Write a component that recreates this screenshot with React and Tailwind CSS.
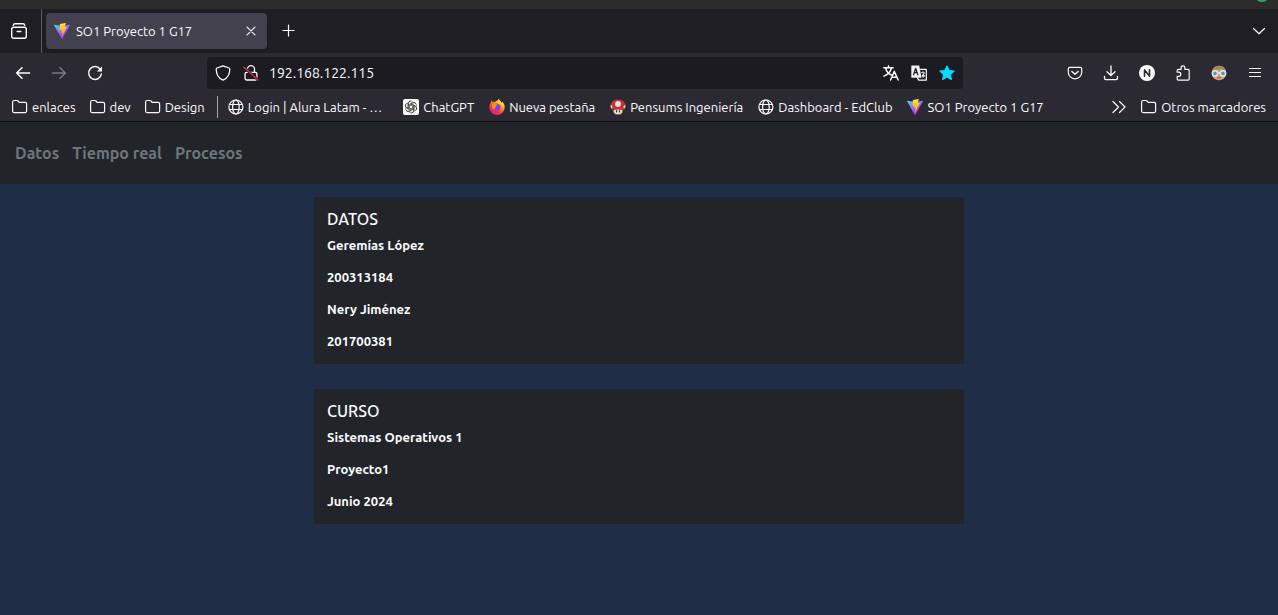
import React from "react";

function Icon({ children, size = "size-4", className = "" }) {
  return (
    <svg
      viewBox="0 0 16 16"
      className={`${size} shrink-0 ${className}`}
      fill="none"
      stroke="currentColor"
      strokeWidth="1.2"
      strokeLinecap="round"
      strokeLinejoin="round"
      aria-hidden="true"
    >
      {children}
    </svg>
  );
}

const FolderIcon = () => (
  <Icon>
    <path d="M.6 12.100V3a1.500 1.500 0 0 1 1.500-1.500h2.700c.5 0 .9.2 1.200.5l1.100 1.300h6a1.500 1.500 0 0 1 1.500 1.500v7.300a1.500 1.500 0 0 1-1.500 1.500h-11a1.500 1.500 0 0 1-1.500-1.500z" />
  </Icon>
);

const GlobeIcon = () => (
  <Icon>
    <circle cx="7.900" cy="8" r="7" />
    <ellipse cx="7.900" cy="8" rx="3.300" ry="7" />
    <path d="M1.600 5.500h12.600M1.600 10.500h12.600" />
  </Icon>
);

function ViteIcon({ id }) {
  return (
    <svg viewBox="0 0 256 257" className="size-4 shrink-0" aria-hidden="true">
      <defs>
        <linearGradient id={`${id}-a`} x1="-.8%" x2="57.6%" y1="7.7%" y2="78.4%">
          <stop offset="0%" stopColor="#41D1FF" />
          <stop offset="100%" stopColor="#BD34FE" />
        </linearGradient>
        <linearGradient id={`${id}-b`} x1="43.4%" x2="50.3%" y1="2.2%" y2="89%">
          <stop offset="0%" stopColor="#FFEA83" />
          <stop offset="8.3%" stopColor="#FFDD35" />
          <stop offset="100%" stopColor="#FFA800" />
        </linearGradient>
      </defs>
      <path
        fill={`url(#${id}-a)`}
        d="M255.2 37.9 134.9 252.98c-2.5 4.4-8.9 4.5-11.4.1L.87 37.96c-2.7-4.8 1.4-10.6 6.8-9.6l120.4 21.5c.8.1 1.6.1 2.3 0l117.9-21.5c5.4-1 9.6 4.8 6.9 9.6Z"
      />
      <path
        fill={`url(#${id}-b)`}
        d="M185.4.06 96.4 17.5a3.3 3.3 0 0 0-2.6 3l-5.5 92.5a3.3 3.3 0 0 0 4 3.4l24.8-5.7c2.3-.5 4.4 1.5 3.9 3.9l-7.4 36a3.3 3.3 0 0 0 4.2 3.8l15.3-4.6c2.4-.7 4.7 1.3 4.2 3.8l-11.7 56.6c-.7 3.5 4 5.5 5.900 2.5l1.3-2 72.5-144.7c1.2-2.400-.9-5.200-3.500-4.700l-25.500 4.900c-2.400.5-4.400-1.800-3.800-4.100L189.4 4.2c.7-2.400-1.400-4.600-4-4.100Z"
      />
    </svg>
  );
}

function ChatIcon() {
  return (
    <svg viewBox="0 0 16 16" className="size-4 shrink-0" aria-hidden="true">
      <rect width="16" height="16" rx="2" fill="#fff" />
      <g fill="none" stroke="#222" strokeWidth=".6">
        {[0, 60, 120, 180, 240, 300].map((angle) => (
          <path
            key={angle}
            transform={`rotate(${angle} 8 8)`}
            d="M4.900 9.300V4.800a2.800 2.800 0 0 1 5-1.600M6.300 9V6l3.300-1.900a2.800 2.800 0 0 1 3.400.4"
          />
        ))}
      </g>
    </svg>
  );
}

function FirefoxIcon() {
  return (
    <svg viewBox="0 0 16 16" className="size-4 shrink-0" aria-hidden="true">
      <defs>
        <linearGradient id="fx-body" x1=".85" y1=".1" x2=".2" y2=".95">
          <stop offset="0" stopColor="#fff44f" />
          <stop offset=".35" stopColor="#ff980e" />
          <stop offset=".65" stopColor="#ff3647" />
          <stop offset="1" stopColor="#e31587" />
        </linearGradient>
      </defs>
      <path
        fill="url(#fx-body)"
        d="M10 0c.4 1.8 2 2.5 3 3.8.2-.4.2-.8.1-1.2 1.600 1.400 2.600 3.500 2.600 5.700A7.700 7.700 0 0 1 .3 8.300C.3 6 1.300 4.100 2 3.200c0-.7.300-1.600.7-2 .2.700.700 1.300 1.200 1.700.700-.2 1.500-.2 2.100 0C6.800 1.900 8.600 1.700 10 0z"
      />
      <circle cx="7.900" cy="8.200" r="3.500" fill="#7543e5" />
      <path
        fill="#ff980e"
        d="M2.800 5.200c1.200-.9 2.900-.8 3.900.1.700 0 1.500.1 2 .3-.3 1-1.500 1-1.900 1.500-.3.500.1 1 .1 1-1 .6-1.600 1.500-1 2.600-1.700-.2-3.500-2.600-3.100-5.500z"
      />
      <path fill="#ffd23a" d="M10 0c.4 2.400 3.200 3.200 3.300 6.800-.7-1.500-1.900-2.200-3.300-2.300C8.500 3.600 8.600 1.700 10 0z" />
    </svg>
  );
}

function MushroomIcon() {
  return (
    <svg viewBox="0 0 16 16" className="size-4 shrink-0" aria-hidden="true">
      <path
        fill="#f3d9c0"
        stroke="#6d4a42"
        strokeWidth=".6"
        d="M3.300 10h9.400c.3 3-.6 5.700-4.700 5.700S3 13 3.300 10z"
      />
      <path
        fill="#c93337"
        stroke="#6d3a3d"
        strokeWidth=".5"
        d="M8 .4c4.400 0 7.600 3 7.600 6.700 0 2.300-1.200 3.900-2.600 3.900-1.200 0-2.200-1-5-1s-3.800 1-5 1C1.600 11 .4 9.400.4 7.100.4 3.400 3.600.4 8 .4z"
      />
      <circle cx="8" cy="5" r="2.900" fill="#e4e0de" />
      <path fill="#ddd8d6" d="M.8 5.900c1.500.2 2 1.600 1.400 3.700C.9 9.200.5 7.500.8 5.900zM15.200 5.900c-1.500.2-2 1.600-1.400 3.700 1.300-.4 1.700-2.100 1.400-3.700z" />
      <path stroke="#222" strokeWidth="1" strokeLinecap="round" d="M6.600 11.600v1.400M9.400 11.600v1.400" />
    </svg>
  );
}

function AvatarIcon() {
  return (
    <svg viewBox="0 0 16 16" className="size-4 shrink-0" aria-hidden="true">
      <circle cx="8" cy="8" r="7.300" fill="#d99a78" />
      <path fill="#a8865a" d="M1 7.500C1 3.500 4 .7 8 .7s7 2.800 7 6.800c-1-2.200-2.500-3-4-3.300-2.300.8-5 .3-6 .2C3.200 4.800 1.800 5.700 1 7.500z" />
      <circle cx="4" cy="8.400" r="2.600" fill="#5f95a1" stroke="#d6eef2" strokeWidth="1.500" />
      <circle cx="12" cy="8.400" r="2.600" fill="#5f95a1" stroke="#d6eef2" strokeWidth="1.500" />
      <path stroke="#e3f3f5" strokeWidth="1.200" d="M6.500 7.900h3" />
      <path stroke="#b8483b" strokeWidth="1" strokeLinecap="round" d="M6.500 12.700h3" />
    </svg>
  );
}

function ToolButton({ label, children, width = "w-9", className = "" }) {
  return (
    <button
      type="button"
      aria-label={label}
      className={`${width} flex h-8 shrink-0 items-center justify-center ${className}`}
    >
      {children}
    </button>
  );
}

function TabStrip() {
  return (
    <div className="flex h-11 items-center bg-[#1f1e25]">
      <ToolButton label="Ver pestañas recientes" width="w-[38px]">
        <Icon>
          <rect x=".7" y="4.300" width="14.600" height="11" rx="2" strokeWidth="1.400" />
          <path d="M2.200 2.300A2 2 0 0 1 4 .8h8a2 2 0 0 1 1.800 1.500M6.200 8.500h3.600" strokeWidth="1.400" />
        </Icon>
      </ToolButton>
      <div className="ml-[3px] mr-1 h-full w-px bg-[#5b5a62]" />
      <div className="flex h-9 w-[221px] items-center rounded bg-[#42414d] pl-2 pr-1 shadow">
        <a href="#inicio" className="flex min-w-0 flex-1 items-center gap-1.5">
          <ViteIcon id="tab" />
          <span className="truncate">SO1 Proyecto 1 G17</span>
        </a>
        <ToolButton label="Cerrar pestaña" width="w-6">
          <Icon className="text-[#e4e3ea]">
            <path d="m4 4 8 8M12 4l-8 8" strokeWidth="1.100" />
          </Icon>
        </ToolButton>
      </div>
      <ToolButton label="Nueva pestaña" className="ml-1">
        <Icon>
          <path d="M7.500 2v11M2 7.500h11" />
        </Icon>
      </ToolButton>
      <ToolButton label="Listar todas las pestañas" className="ml-auto mr-px">
        <Icon>
          <path d="m2.500 5.500 5.500 5.300 5.500-5.300" />
        </Icon>
      </ToolButton>
    </div>
  );
}

function Toolbar() {
  return (
    <div className="flex h-10 items-center px-[5px]">
      <ToolButton label="Atrás">
        <Icon>
          <path d="M14.600 8H1.700M7 2.800 1.600 8 7 13.200" strokeWidth="1.500" />
        </Icon>
      </ToolButton>
      <ToolButton label="Adelante" className="text-[#7c7b83]">
        <Icon>
          <path d="M1.400 8h12.900M9 2.800 14.400 8 9 13.200" strokeWidth="1.500" />
        </Icon>
      </ToolButton>
      <ToolButton label="Recargar">
        <Icon>
          <path d="M13.100 4A6.400 6.400 0 1 0 14.400 9" strokeWidth="1.500" />
          <path d="M15 1.500v5.100H9.900z" fill="currentColor" stroke="none" />
        </Icon>
      </ToolButton>
      <div className="mx-[94px] flex h-8 min-w-0 flex-1 items-center rounded bg-[#1c1b22] px-0.5">
        <ToolButton label="Protección" width="w-7">
          <Icon>
            <path d="m8 .8 6 2.200c.5.200.8.700.8 1.200-.1 5-2.200 9-6.800 11C3.400 13.200 1.300 9.200 1.200 4.200c0-.5.300-1 .8-1.200z" strokeWidth="1.300" />
          </Icon>
        </ToolButton>
        <ToolButton label="Conexión no segura" width="w-7">
          <Icon>
            <path d="M4.500 7V4.200a3.500 3.500 0 0 1 7 0V7M3.500 7.300h9a1.400 1.400 0 0 1 1.400 1.400v4.900a1.400 1.400 0 0 1-1.400 1.400h-9a1.400 1.400 0 0 1-1.400-1.400V8.700a1.400 1.400 0 0 1 1.400-1.400z" strokeWidth="1.300" />
            <path d="m1 2.200 14 12.800" stroke="#1c1b22" strokeWidth="2.600" />
            <path d="m1 2.200 14 12.800" stroke="#e22850" strokeWidth="1.400" />
          </Icon>
        </ToolButton>
        <input
          type="text"
          aria-label="Dirección"
          defaultValue="192.168.122.115"
          className="ml-1 min-w-0 flex-1 bg-transparent text-sm outline-none"
        />
        <ToolButton label="Traducir página" width="w-7">
          <Icon>
            <path d="M.8 2.800h9.400M5.500.8v2M2.600 3c.7 3.200 3.200 5.800 6 7.200M8.500 3C7.600 6.800 4.600 9.600 1 11.200" strokeWidth="1.400" />
            <path d="m7.600 15 3.700-8.600L15.200 15M9 12.300h4.900" strokeWidth="1.500" />
          </Icon>
        </ToolButton>
        <ToolButton label="Traductor" width="w-7">
          <Icon>
            <path d="M9.500 4.300h5.800v10.800H7.800l-1.400-2.400" strokeWidth="1.200" />
            <path d="M.3.500h7.900l2.300 12.300H.3z" fill="#f0f0f4" stroke="none" />
            <path d="m2.600 9.600 2.100-6.200 2.100 6.200M3.300 7.700h2.800" stroke="#1c1b22" strokeWidth="1.300" />
            <path d="M10.800 7.600c1-1.100 2.800-.4 2.100.9-.3.600-1.200 1.200-1.800 2.400h2.600M12.100 11v1.200" strokeWidth="1.100" />
          </Icon>
        </ToolButton>
        <ToolButton label="Editar marcador" width="w-7" className="text-[#00ddff]">
          <Icon>
            <path
              d="m8 1 2.100 4.500 4.900.6-3.600 3.400.9 5L8 12.100l-4.300 2.400.9-5L1 6.100l4.900-.6z"
              fill="currentColor"
            />
          </Icon>
        </ToolButton>
      </div>
      <ToolButton label="Guardar en Pocket">
        <Icon>
          <path d="M2.700 2.400h10.600a1.400 1.400 0 0 1 1.400 1.400v3.500a6.700 6.500 0 0 1-13.400 0V3.800a1.400 1.400 0 0 1 1.400-1.400z" />
          <path d="M4.900 6.500 8 9.300l3.100-2.800" strokeWidth="1.400" />
        </Icon>
      </ToolButton>
      <ToolButton label="Descargas">
        <Icon>
          <path d="M8 .8v9.500M4 6.700l4 3.800 4-3.800M1.500 11.500v1.800c0 .8.600 1.400 1.400 1.400h10.200c.8 0 1.400-.6 1.400-1.400v-1.800" strokeWidth="1.300" />
        </Icon>
      </ToolButton>
      <ToolButton label="Perfil N">
        <Icon>
          <circle cx="8" cy="8" r="8" fill="#fff" stroke="none" />
          <path d="M5.500 11.300V4.900l5 6.200V4.700" stroke="#2b2a33" strokeWidth="1.600" />
        </Icon>
      </ToolButton>
      <ToolButton label="Extensiones">
        <Icon>
          <path d="M2.200 7.200V5.600c0-.7.500-1.200 1.200-1.200h2.700V2.800a1.900 1.900 0 0 1 3.800 0v1.600H13c.7 0 1.200.5 1.200 1.200v8.400c0 .7-.5 1.200-1.200 1.200H3.400c-.7 0-1.200-.5-1.200-1.200v-2.600h1.500a1.900 1.900 0 0 0 0-4.200z" />
        </Icon>
      </ToolButton>
      <ToolButton label="Cuenta">
        <AvatarIcon />
      </ToolButton>
      <ToolButton label="Menú">
        <Icon>
          <path d="M2.500 3.500h11M2.500 7.500h11M2.500 11.500h11" strokeWidth="1.100" />
        </Icon>
      </ToolButton>
    </div>
  );
}

function Bookmark({ icon, children, className = "" }) {
  return (
    <a href="#marcador" className={`flex shrink-0 items-center gap-1 whitespace-nowrap ${className}`}>
      {icon}
      <span>{children}</span>
    </a>
  );
}

function BookmarksBar() {
  return (
    <div className="flex h-7 items-center px-3">
      <div className="flex shrink-0 items-center gap-3.5">
        <Bookmark icon={<FolderIcon />}>enlaces</Bookmark>
        <Bookmark icon={<FolderIcon />}>dev</Bookmark>
        <Bookmark icon={<FolderIcon />}>Design</Bookmark>
      </div>
      <div className="mr-2.5 ml-3 h-[22px] w-px shrink-0 bg-[#a5a4aa]" />
      <div className="flex min-w-0 flex-1 items-center gap-[15px] overflow-hidden">
        <Bookmark icon={<GlobeIcon />} className="mr-1.5">Login | Alura Latam - …</Bookmark>
        <Bookmark icon={<ChatIcon />}>ChatGPT</Bookmark>
        <Bookmark icon={<FirefoxIcon />}>Nueva pestaña</Bookmark>
        <Bookmark icon={<MushroomIcon />}>Pensums Ingeniería</Bookmark>
        <Bookmark icon={<GlobeIcon />}>Dashboard - EdClub</Bookmark>
        <Bookmark icon={<ViteIcon id="bookmark" />}>SO1 Proyecto 1 G17</Bookmark>
      </div>
      <div className="flex shrink-0 items-center gap-3.5">
        <button type="button" aria-label="Más marcadores">
          <Icon>
            <path d="M2 2.500 7.500 8 2 13.500M8.500 2.500 14 8l-5.500 5.500" />
          </Icon>
        </button>
        <Bookmark icon={<FolderIcon />}>Otros marcadores</Bookmark>
      </div>
    </div>
  );
}

function Card({ title, lines }) {
  return (
    <section className="rounded-xs bg-[#212529] px-[13px] pt-3 pb-[13px]">
      <h2 className="text-base leading-5 font-medium">{title}</h2>
      <div className="mt-1.5 flex flex-col gap-3 text-[13px] leading-5 font-bold">
        {lines.map((line) => (
          <p key={line}>{line}</p>
        ))}
      </div>
    </section>
  );
}

export default function App() {
  return (
    <div className="flex min-h-screen flex-col bg-[#1f2d47] font-['Ubuntu','Noto_Sans',sans-serif] text-[13px] leading-5 text-[#fbfbfe]">
      <header>
        <div className="flex h-[9px] justify-end bg-[#2c2c2c] pr-2">
          <svg viewBox="0 0 16 9" className="h-[9px] w-4" aria-hidden="true">
            <circle cx="8" cy="-6" r="8" fill="#2fa84f" />
          </svg>
        </div>
        <TabStrip />
        <div className="border-b border-[#0c0c0d] bg-[#2b2a33]">
          <Toolbar />
          <BookmarksBar />
        </div>
      </header>
      <nav className="flex h-[62px] items-center gap-[13px] bg-[#212529] px-[15px] text-base font-bold text-[#6c757d]">
        <a href="#datos">Datos</a>
        <a href="#tiempo-real">Tiempo real</a>
        <a href="#procesos">Procesos</a>
      </nav>
      <main className="mx-auto flex w-full max-w-[650px] flex-col gap-[25px] py-[13px]">
        <Card title="DATOS" lines={["Geremías López", "200313184", "Nery Jiménez", "201700381"]} />
        <Card title="CURSO" lines={["Sistemas Operativos 1", "Proyecto1", "Junio 2024"]} />
      </main>
    </div>
  );
}
